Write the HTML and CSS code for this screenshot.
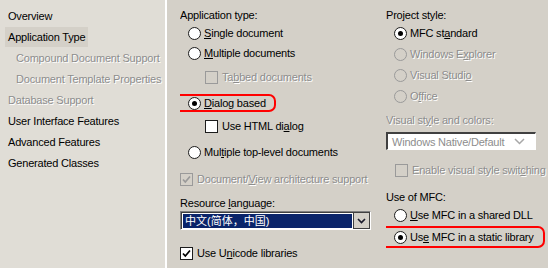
FILE: index.html
```html
<!DOCTYPE html>
<html>
<head>
    <meta charset="utf-8">
    <title>MFC Application Wizard</title>
    <link rel="stylesheet" href="styles.css">
</head>
<body>
    <div class="wizard">
        <!-- left navigation -->
        <div class="wizard-nav">
            <div class="nav-item"><span class="nav-label">Overview</span></div>
            <div class="nav-item active"><span class="nav-label">Application Type</span></div>
            <div class="nav-item sub disabled"><span class="nav-label">Compound Document Support</span></div>
            <div class="nav-item sub disabled"><span class="nav-label">Document Template Properties</span></div>
            <div class="nav-item disabled"><span class="nav-label">Database Support</span></div>
            <div class="nav-item"><span class="nav-label">User Interface Features</span></div>
            <div class="nav-item"><span class="nav-label">Advanced Features</span></div>
            <div class="nav-item"><span class="nav-label">Generated Classes</span></div>
        </div>

        <div class="wizard-page">
            <!-- application type -->
            <div class="page-col left">
                <div class="group-label mt-7">Application type:</div>
                <div class="option"><span class="radio"></span><span><u>S</u>ingle document</span></div>
                <div class="option"><span class="radio"></span><span><u>M</u>ultiple documents</span></div>
                <div class="option sub disabled mt-4"><span class="check"></span><span>Ta<u>b</u>bed documents</span></div>
                <div class="option mt-6">
                    <span class="marked">
                        <span class="radio checked"></span><span><u>D</u>ialog based</span>
                    </span>
                </div>
                <div class="option sub mt-3"><span class="check"></span><span>Use HTML di<u>a</u>log</span></div>
                <div class="option mt-6"><span class="radio"></span><span>Mul<u>t</u>iple top-level documents</span></div>
                <div class="option disabled mt-7">
                    <span class="check"><svg width="9" height="9" viewBox="0 0 9 9"><path d="M1 4.5 L3.3 7 L8 1.5" /></svg></span>
                    <span>Document/<u>V</u>iew architecture support</span>
                </div>
                <div class="group-label mt-6">Resource <u>l</u>anguage:</div>
                <div class="combo">
                    <div class="combo-field"><span class="combo-value">中文(简体，中国)</span></div>
                    <div class="combo-button">
                        <svg width="9" height="6" viewBox="0 0 9 6"><polyline points="1,1 4.5,4.5 8,1" /></svg>
                    </div>
                </div>
                <div class="option mt-13">
                    <span class="check"><svg width="9" height="9" viewBox="0 0 9 9"><path d="M1 4.5 L3.3 7 L8 1.5" /></svg></span>
                    <span>Use U<u>n</u>icode libraries</span>
                </div>
            </div>

            <!-- project style / MFC -->
            <div class="page-col right">
                <div class="group-label mt-7">Project style:</div>
                <div class="option"><span class="radio checked"></span><span>MFC st<u>a</u>ndard</span></div>
                <div class="option disabled mt-1"><span class="radio"></span><span>Windows E<u>x</u>plorer</span></div>
                <div class="option disabled mt-1"><span class="radio"></span><span>Visual Studi<u>o</u></span></div>
                <div class="option disabled mt-1"><span class="radio"></span><span>O<u>f</u>fice</span></div>
                <div class="group-label disabled mt-6">Visual st<u>y</u>le and colors:</div>
                <div class="select disabled mt-4">
                    <span>Windows Native/Default</span>
                    <svg width="11" height="7" viewBox="0 0 11 7"><polyline points="1,1 5.5,5.5 10,1" /></svg>
                </div>
                <div class="option inset disabled mt-10"><span class="check"></span><span>Enable visual style swit<u>c</u>hing</span></div>
                <div class="group-label mt-9">Use of MFC:</div>
                <div class="option"><span class="radio"></span><span><u>U</u>se MFC in a shared DLL</span></div>
                <div class="option mt-2">
                    <span class="marked tall">
                        <span class="radio checked"></span><span>Us<u>e</u> MFC in a static library</span>
                    </span>
                </div>
            </div>
        </div>
    </div>
</body>
</html>
```

FILE: styles.css
```css
body {
    margin: 0;
    font-family: "Liberation Sans", Arial, sans-serif;
    font-size: 11px;
    letter-spacing: -0.2px;
    color: #000;
    background-color: #d4d0c8;
    overflow: hidden;
}
u {
    text-underline-offset: 1px;
}
.wizard {
    display: flex;
    width: 548px;
    height: 268px;
}

/* navigation */
.wizard-nav {
    width: 165px;
    flex: none;
    padding-top: 6px;
    background-color: #e0ddd6;
    border-right: 2px solid #fff;
}
.nav-item {
    height: 21px;
    padding-left: 5px;
    white-space: nowrap;
}
.nav-item.sub {
    padding-left: 13px;
}
.nav-label {
    display: inline-block;
    height: 20px;
    line-height: 20px;
    padding: 0 3px;
}
.nav-item.active .nav-label {
    background-color: #d4d0c8;
}
.nav-item.disabled {
    color: #8d8d8d;
}

/* page */
.wizard-page {
    flex: 1;
    display: flex;
    gap: 15px;
    padding-left: 13px;
    min-width: 0;
}
.page-col {
    display: flex;
    flex-direction: column;
    overflow: hidden;
    white-space: nowrap;
}
.page-col.left {
    width: 191px;
    flex: none;
}
.page-col.right {
    flex: 1;
    min-width: 0;
}
.group-label {
    height: 16px;
    line-height: 16px;
}
.disabled {
    color: #8d8d8d;
    text-shadow: 1px 1px 0 #fff;
}

.option {
    display: flex;
    align-items: center;
    height: 20px;
    flex: none;
}
.option.sub {
    padding-left: 25px;
}
.option.inset {
    padding-left: 9px;
}
.marked {
    position: relative;
    display: flex;
    align-items: center;
}
.marked::after {
    content: "";
    position: absolute;
    left: -7px;
    right: -10px;
    top: -3px;
    bottom: -2px;
    border: 2px solid #f00;
    border-radius: 7px;
}
.marked.tall::after {
    left: -9px;
    right: -11px;
    top: -5px;
    bottom: -4px;
}

.radio {
    position: relative;
    flex: none;
    width: 13px;
    height: 13px;
    margin: 0 3px 0 8px;
    box-sizing: border-box;
    border: 1px solid #1c1c1c;
    border-radius: 50%;
    background-color: #fff;
}
.radio.checked::after {
    content: "";
    position: absolute;
    left: 3px;
    top: 3px;
    width: 5px;
    height: 5px;
    border-radius: 50%;
    background-color: #000;
}
.check {
    flex: none;
    display: flex;
    align-items: center;
    justify-content: center;
    width: 13px;
    height: 13px;
    margin-right: 4px;
    box-sizing: border-box;
    border: 1px solid #1c1c1c;
    background-color: #fff;
}
.check path {
    fill: none;
    stroke: #000;
    stroke-width: 1.7;
}
.option.disabled .radio,
.option.disabled .check {
    border-color: #9a9a9a;
    background-color: #d4d0c8;
}
.option.disabled .check path {
    stroke: #9a9a9a;
}

/* resource language combo */
.combo {
    display: flex;
    height: 19px;
    flex: none;
    box-sizing: border-box;
    border: 1px solid;
    border-color: #808080 #fff #fff #808080;
    background-color: #fff;
}
.combo-field {
    flex: 1;
    padding: 1px;
    border-top: 1px solid #404040;
    border-left: 1px solid #404040;
    display: flex;
}
.combo-value {
    flex: 1;
    padding-left: 2px;
    line-height: 15px;
    letter-spacing: 0;
    color: #fff;
    background-color: #0a246a;
    font-family: "Liberation Sans", "Noto Sans CJK SC", sans-serif;
}
.combo-button {
    width: 17px;
    display: flex;
    align-items: center;
    justify-content: center;
    box-sizing: border-box;
    border: 1px solid #404040;
    background-color: #d4d0c8;
}
.combo-button polyline {
    fill: none;
    stroke: #1a1a2a;
    stroke-width: 1.6;
}

/* visual style select */
.select {
    display: flex;
    align-items: center;
    justify-content: space-between;
    width: 150px;
    height: 18px;
    flex: none;
    box-sizing: border-box;
    padding: 0 10px 0 4px;
    border-style: solid;
    border-width: 2px 1px 1px 2px;
    border-color: #404040 #fff #fff #404040;
    background-color: #fff;
    text-shadow: none;
    color: #8d8d8d;
}
.select polyline {
    fill: none;
    stroke: #a8a8a8;
    stroke-width: 1.5;
}

.mt-1 { margin-top: 1px; }
.mt-2 { margin-top: 2px; }
.mt-3 { margin-top: 3px; }
.mt-4 { margin-top: 4px; }
.mt-6 { margin-top: 6px; }
.mt-7 { margin-top: 7px; }
.mt-9 { margin-top: 9px; }
.mt-10 { margin-top: 10px; }
.mt-13 { margin-top: 13px; }
```
